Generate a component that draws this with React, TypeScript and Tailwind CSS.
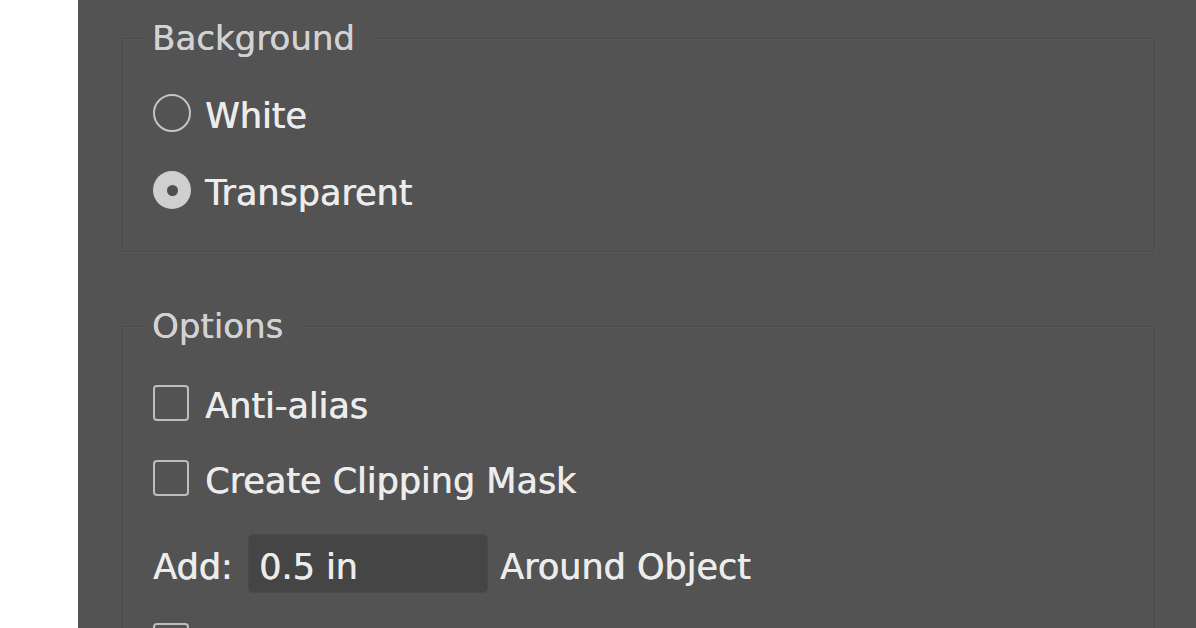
import React from "react";

const font = { fontFamily: '"DejaVu Sans", "Liberation Sans", sans-serif' };

function Radio({ checked }: { checked?: boolean }) {
  return checked ? (
    <span className="flex h-[38px] w-[38px] shrink-0 items-center justify-center rounded-full bg-[#cfcfcf]">
      <span className="h-[11px] w-[11px] rounded-full bg-[#4f4f4f]" />
    </span>
  ) : (
    <span className="h-[38px] w-[38px] shrink-0 rounded-full border-2 border-[#c4c4c4]" />
  );
}

function Checkbox() {
  return <span className="h-[36px] w-[36px] shrink-0 rounded-[4px] border-2 border-[#bdbdbd]" />;
}

function Group({ title, className, children }: { title: string; className?: string; children: React.ReactNode }) {
  return (
    <fieldset
      className={`border border-[#494949] pl-[30px] shadow-[inset_1px_1px_0_#5a5a5a,1px_1px_0_#5a5a5a] ${className ?? ""}`}
    >
      <legend className="-ml-[6px] bg-[#535353] pl-[5px] pr-[20px] text-[34px] leading-[40px] text-[#d2d2d2] [text-shadow:0.3px_0_0_#d2d2d2]">
        {title}
      </legend>
      {children}
    </fieldset>
  );
}

const label = "pt-[6px] text-[35px] leading-[40px] text-[#ececec] [text-shadow:0.6px_0_0_#ececec]";

export default function App() {
  return (
    <div className="flex h-[628px] w-[1196px] overflow-hidden bg-white" style={font}>
      <div className="w-[78px] shrink-0 bg-white" />
      <div className="flex-1 bg-[#535353] pl-[44px] pr-[41px] pt-[18px]">
        {/* Background */}
        <Group title="Background" className="pb-[41px]">
          <div className="mt-[35px] flex h-[40px] items-center gap-[14px]">
            <Radio />
            <span className={label}>White</span>
          </div>
          <div className="mt-[37px] flex h-[40px] items-center gap-[14px]">
            <Radio checked />
            <span className={label}>Transparent</span>
          </div>
        </Group>

        {/* Options */}
        <Group title="Options" className="mt-[54px] pb-[40px]">
          <div className="mt-[37px] flex h-[40px] items-center gap-[16px]">
            <Checkbox />
            <span className={label}>Anti-alias</span>
          </div>
          <div className="mt-[35px] flex h-[40px] items-center gap-[16px]">
            <Checkbox />
            <span className={label}>Create Clipping Mask</span>
          </div>
          <div className="mt-[36px] flex h-[59px] items-center">
            <span className={`${label} w-[95px]`}>Add:</span>
            <div className="flex h-[59px] w-[240px] items-center rounded-[5px] border border-[#4a4a4a] bg-[#454545] px-[10px]">
              <span className={label}>0.5 in</span>
            </div>
            <span className={`${label} ml-[12px]`}>Around Object</span>
          </div>
          <div className="mt-[28px] flex h-[40px] items-center gap-[16px]">
            <Checkbox />
            <span className={label}>Preserve spot colors</span>
          </div>
        </Group>
      </div>
    </div>
  );
}
